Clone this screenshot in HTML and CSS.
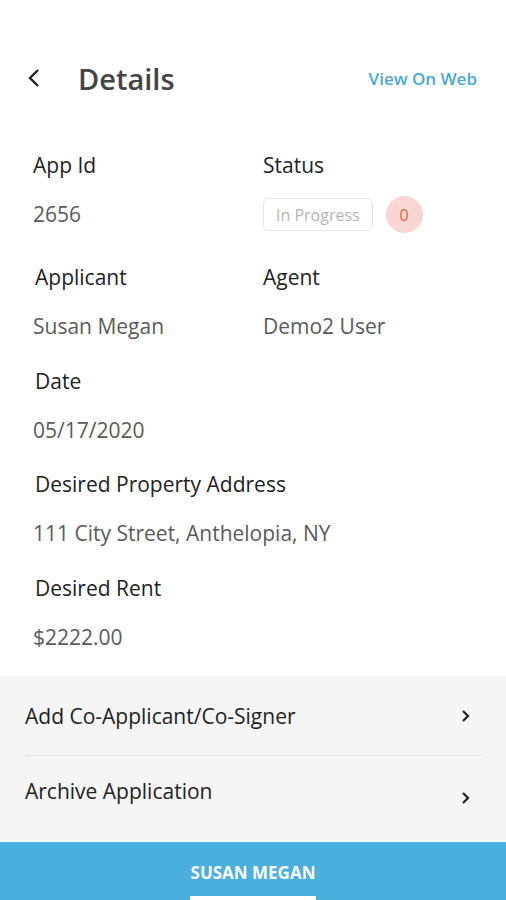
FILE: index.html
```html
<!DOCTYPE html>
<html lang="en">
<head>
    <meta charset="UTF-8">
    <meta name="viewport" content="width=device-width, initial-scale=1.0">
    <title>Details</title>
    <link rel="stylesheet" href="styles.css">
</head>
<body>
    <div class="header">
        <svg class="back" width="16" height="20" viewBox="0 0 16 20">
            <path d="M12 2 L4 10 L12 18" fill="none" stroke="#222" stroke-width="2.4"/>
        </svg>
        <h1>Details</h1>
        <a class="web-link" href="#">View On Web</a>
    </div>

    <div class="details">
        <div class="field-row first">
            <div class="field">
                <div class="label">App Id</div>
                <div class="value">2656</div>
            </div>
            <div class="field">
                <div class="label">Status</div>
                <div class="status">
                    <span class="pill">In Progress</span>
                    <span class="badge">0</span>
                </div>
            </div>
        </div>
        <div class="field-row">
            <div class="field">
                <div class="label indent">Applicant</div>
                <div class="value">Susan Megan</div>
            </div>
            <div class="field">
                <div class="label">Agent</div>
                <div class="value">Demo2 User</div>
            </div>
        </div>
        <div class="field-row">
            <div class="field">
                <div class="label indent">Date</div>
                <div class="value">05/17/2020</div>
            </div>
        </div>
        <div class="field-row">
            <div class="field wide">
                <div class="label indent">Desired Property Address</div>
                <div class="value">111 City Street, Anthelopia, NY</div>
            </div>
        </div>
        <div class="field-row">
            <div class="field">
                <div class="label indent">Desired Rent</div>
                <div class="value">$2222.00</div>
            </div>
        </div>
    </div>

    <div class="actions">
        <div class="action">
            <span>Add Co-Applicant/Co-Signer</span>
            <svg width="12" height="16" viewBox="0 0 12 16"><path d="M3 3 L8 8 L3 13" fill="none" stroke="#222" stroke-width="2.2"/></svg>
        </div>
        <div class="action last">
            <span>Archive Application</span>
            <svg class="low" width="12" height="16" viewBox="0 0 12 16"><path d="M3 3 L8 8 L3 13" fill="none" stroke="#222" stroke-width="2.2"/></svg>
        </div>
    </div>

    <div class="tabbar">
        <div class="tab">SUSAN MEGAN</div>
    </div>
</body>
</html>
```

FILE: styles.css
```css
body {
    margin: 0;
    width: 506px;
    height: 900px;
    overflow: hidden;
    background-color: #fff;
    font-family: 'Open Sans', 'Noto Sans', sans-serif;
    color: #222;
    display: flex;
    flex-direction: column;
}
.header {
    display: flex;
    align-items: center;
    height: 40px;
    margin-top: 58px;
    padding: 0 29px 0 26px;
}
.back {
    margin-right: 36px;
}
.header h1 {
    margin: 0;
    font-size: 29px;
    font-weight: 600;
    color: #444;
    flex: 1;
}
.web-link {
    color: #4aa9d6;
    font-size: 17px;
    font-weight: 600;
    text-decoration: none;
}
.details {
    padding: 55px 0 0 33px;
    flex: 1;
    min-height: 0;
    overflow: hidden;
}
.field-row {
    display: flex;
    height: 103.5px;
}
.field-row.first {
    height: 112px;
}
.field {
    width: 230px;
}
.field.wide {
    width: auto;
}
.label {
    font-size: 21px;
    line-height: 24px;
    color: #222;
}
.label.indent {
    padding-left: 2px;
}
.value {
    margin-top: 25px;
    font-size: 21px;
    line-height: 24px;
    color: #5a5a5a;
}
.status {
    display: flex;
    align-items: center;
    margin-top: 19px;
    gap: 13px;
}
.pill {
    border: 1.5px solid #e6e6e6;
    border-radius: 6px;
    height: 33px;
    box-sizing: border-box;
    padding: 0 12px;
    display: flex;
    align-items: center;
    font-size: 16px;
    color: #b5b5b5;
}
.badge {
    width: 37px;
    height: 37px;
    border-radius: 50%;
    background-color: #f7d6d4;
    color: #e0653a;
    font-size: 16px;
    display: flex;
    align-items: center;
    justify-content: center;
}
.actions {
    background-color: #f5f5f5;
    padding: 0 24px 0 25px;
    height: 166px;
    flex-shrink: 0;
}
.action {
    display: flex;
    align-items: center;
    justify-content: space-between;
    height: 79px;
    font-size: 21px;
    color: #222;
    border-bottom: 1px solid #e4e4e4;
}
.action.last {
    border-bottom: none;
    height: 72px;
    align-items: flex-start;
    padding-top: 21px;
    box-sizing: border-box;
}
.action svg {
    margin-right: 10px;
}
.action svg.low {
    margin-top: 13px;
}
.tabbar {
    background-color: #4aaede;
    height: 58px;
    flex-shrink: 0;
    display: flex;
    justify-content: center;
}
.tab {
    width: 126px;
    color: #fff;
    font-size: 17px;
    font-weight: bold;
    text-align: center;
    padding-top: 19px;
    box-sizing: border-box;
    border-bottom: 4px solid #fff;
}
```
